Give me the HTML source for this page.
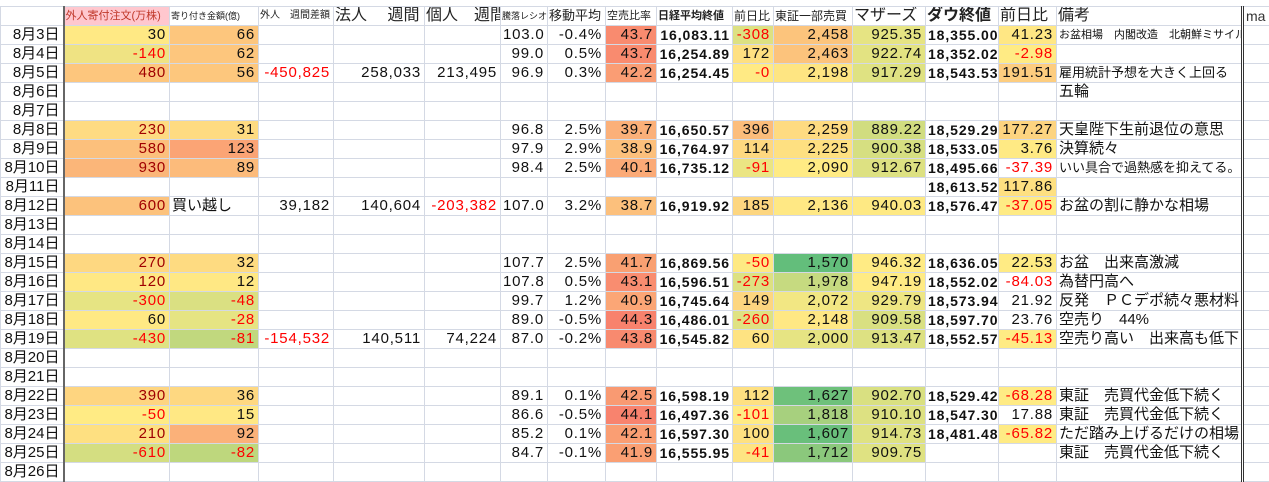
<!DOCTYPE html>
<html><head><meta charset="utf-8">
<style>
body{margin:0;background:#fff;width:1269px;height:465px;overflow:hidden;font-family:"Liberation Sans","Noto Sans CJK JP",sans-serif;}
table{position:absolute;left:0;top:6px;border-collapse:collapse;table-layout:fixed;width:1269px;}
td{height:18px;border:1px solid #d4d9e4;padding:0 3px 0 2px;font-size:15px;line-height:18px;white-space:nowrap;overflow:hidden;text-align:right;color:#111;letter-spacing:0.8px;}
td.h{text-align:left;font-size:11px;color:#222;padding:0 1px;letter-spacing:0;}
td.hl{text-align:left;font-size:16px;color:#222;padding:0 1px;letter-spacing:0;}
td.d{border-right:2px solid #666;font-size:15px;letter-spacing:0;}
td.b{font-weight:bold;font-size:14px;letter-spacing:0.9px;padding-right:2px;}
td.l{text-align:left;letter-spacing:0;}
td.s{text-align:left;font-size:11px;letter-spacing:0;}
.r{color:#ff0000;}
.dr{color:#a00000;}
td.ma{border-left:3px double #333;text-align:left;font-size:14px;color:#333;letter-spacing:0;}
.top{position:absolute;left:0;top:0;width:1269px;height:6px;border-bottom:1px solid #d4d9e4;}
</style></head><body>
<div class="top"></div>
<table>
<colgroup><col style="width:63px"><col style="width:106px"><col style="width:89px"><col style="width:75px"><col style="width:91px"><col style="width:76px"><col style="width:47px"><col style="width:58px"><col style="width:51px"><col style="width:76px"><col style="width:41px"><col style="width:79px"><col style="width:73px"><col style="width:73px"><col style="width:58px"><col style="width:186px"><col style="width:27px"></colgroup>
<tr><td class="d"></td><td class="h" style="background:#ffc7ce;color:#c0392b;">外人寄付注文(万株)</td><td class="h" style="font-size:9px">寄り付き金額(億)</td><td class="h" style="font-size:10px">外人　週間差額</td><td class="hl">法人　 週間</td><td class="hl">個人　週間</td><td class="h" style="font-size:9px">騰落レシオ</td><td class="h" style="font-size:13px">移動平均</td><td class="h" style="font-size:11px">空売比率</td><td class="h" style="font-weight:bold;font-size:11px">日経平均終値</td><td class="h" style="font-size:12px">前日比</td><td class="h" style="font-size:12px">東証一部売買</td><td class="hl">マザーズ</td><td class="hl" style="font-weight:bold">ダウ終値</td><td class="hl">前日比</td><td class="hl">備考</td><td class="ma">ma</td></tr>

<tr><td class="d">8月3日</td><td style="background:#ffe984">30</td><td style="background:#fdc67d">66</td><td></td><td></td><td></td><td>103.0</td><td>-0.4%</td><td style="background:#f98b6f">43.7</td><td class="b">16,083.11</td><td class="r" style="background:#dde182">-308</td><td style="background:#fcc47c">2,458</td><td style="background:#e6e483">925.35</td><td class="b">18,355.00</td><td style="background:#ffe784">41.23</td><td class="s">お盆相場　内閣改造　北朝鮮ミサイル</td><td class="ma"></td></tr>
<tr><td class="d">8月4日</td><td class="r" style="background:#efe383">-140</td><td style="background:#fdc67d">62</td><td></td><td></td><td></td><td>99.0</td><td>0.5%</td><td style="background:#f98b6f">43.7</td><td class="b">16,254.89</td><td style="background:#fee081">172</td><td style="background:#fcc37c">2,463</td><td style="background:#e3e382">922.74</td><td class="b">18,352.02</td><td class="r" style="background:#ffeb84">-2.98</td><td class="l"></td><td class="ma"></td></tr>
<tr><td class="d">8月5日</td><td class="dr" style="background:#fdc67d">480</td><td style="background:#fdc77d">56</td><td class="r">-450,825</td><td>258,033</td><td>213,495</td><td>96.9</td><td>0.3%</td><td style="background:#fa9d74">42.2</td><td class="b">16,254.45</td><td class="r" style="background:#ffea84">-0</td><td style="background:#fee582">2,198</td><td style="background:#dfe282">917.29</td><td class="b">18,543.53</td><td style="background:#fdcd7f">191.51</td><td class="l" style="font-size:13px">雇用統計予想を大きく上回る</td><td class="ma"></td></tr>
<tr><td class="d">8月6日</td><td></td><td></td><td></td><td></td><td></td><td></td><td></td><td></td><td></td><td></td><td></td><td></td><td></td><td></td><td class="l">五輪</td><td class="ma"></td></tr>
<tr><td class="d">8月7日</td><td></td><td></td><td></td><td></td><td></td><td></td><td></td><td></td><td></td><td></td><td></td><td></td><td></td><td></td><td class="l"></td><td class="ma"></td></tr>
<tr><td class="d">8月8日</td><td class="dr" style="background:#fedb82">230</td><td style="background:#fedb81">31</td><td></td><td></td><td></td><td>96.8</td><td>2.5%</td><td style="background:#fbb079">39.7</td><td class="b">16,650.57</td><td style="background:#fcbd7b">396</td><td style="background:#fedb81">2,259</td><td style="background:#d1dd80">889.22</td><td class="b">18,529.29</td><td style="background:#fdd480">177.27</td><td class="l">天皇陛下生前退位の意思</td><td class="ma"></td></tr>
<tr><td class="d">8月9日</td><td class="dr" style="background:#fcc07c">580</td><td style="background:#fba475">123</td><td></td><td></td><td></td><td>97.9</td><td>2.9%</td><td style="background:#fcc07c">38.9</td><td class="b">16,764.97</td><td style="background:#fed880">114</td><td style="background:#fee081">2,225</td><td style="background:#d6df81">900.38</td><td class="b">18,533.05</td><td style="background:#ffea84">3.76</td><td class="l">決算続々</td><td class="ma"></td></tr>
<tr><td class="d">8月10日</td><td class="dr" style="background:#fbb679">930</td><td style="background:#fcbb7b">89</td><td></td><td></td><td></td><td>98.4</td><td>2.5%</td><td style="background:#fbaa77">40.1</td><td class="b">16,735.12</td><td class="r" style="background:#ebe583">-91</td><td style="background:#ffeb84">2,090</td><td style="background:#dde182">912.67</td><td class="b">18,495.66</td><td class="r">-37.39</td><td class="l" style="font-size:13px">いい具合で過熱感を抑えてる。</td><td class="ma"></td></tr>
<tr><td class="d">8月11日</td><td></td><td></td><td></td><td></td><td></td><td></td><td></td><td></td><td></td><td></td><td></td><td></td><td class="b">18,613.52</td><td style="background:#fee081">117.86</td><td class="l"></td><td class="ma"></td></tr>
<tr><td class="d">8月12日</td><td class="dr" style="background:#fcc27c">600</td><td class="l">買い越し</td><td>39,182</td><td>140,604</td><td class="r">-203,382</td><td>107.0</td><td>3.2%</td><td style="background:#fcc07c">38.7</td><td class="b">16,919.92</td><td style="background:#fdd680">185</td><td style="background:#ffe884">2,136</td><td style="background:#fee983">940.03</td><td class="b">18,576.47</td><td class="r" style="background:#ffeb84">-37.05</td><td class="l">お盆の割に静かな相場</td><td class="ma"></td></tr>
<tr><td class="d">8月13日</td><td></td><td></td><td></td><td></td><td></td><td></td><td></td><td></td><td></td><td></td><td></td><td></td><td></td><td></td><td class="l"></td><td class="ma"></td></tr>
<tr><td class="d">8月14日</td><td></td><td></td><td></td><td></td><td></td><td></td><td></td><td></td><td></td><td></td><td></td><td></td><td></td><td></td><td class="l"></td><td class="ma"></td></tr>
<tr><td class="d">8月15日</td><td class="dr" style="background:#fed881">270</td><td style="background:#fedb81">32</td><td></td><td></td><td></td><td>107.7</td><td>2.5%</td><td style="background:#f9a072">41.7</td><td class="b">16,869.56</td><td class="r" style="background:#fee983">-50</td><td style="background:#63be7b">1,570</td><td style="background:#ffeb84">946.32</td><td class="b">18,636.05</td><td style="background:#ffeb84">22.53</td><td class="l">お盆　出来高激減</td><td class="ma"></td></tr>
<tr><td class="d">8月16日</td><td class="dr" style="background:#ffe884">120</td><td style="background:#ffe884">12</td><td></td><td></td><td></td><td>107.8</td><td>0.5%</td><td style="background:#f98d70">43.1</td><td class="b">16,596.51</td><td class="r" style="background:#dde182">-273</td><td style="background:#c6da80">1,978</td><td style="background:#ffeb84">947.19</td><td class="b">18,552.02</td><td class="r">-84.03</td><td class="l">為替円高へ</td><td class="ma"></td></tr>
<tr><td class="d">8月17日</td><td class="r" style="background:#e6e483">-300</td><td class="r" style="background:#dae082">-48</td><td></td><td></td><td></td><td>99.7</td><td>1.2%</td><td style="background:#fba676">40.9</td><td class="b">16,745.64</td><td style="background:#fdd680">149</td><td style="background:#f2e783">2,072</td><td style="background:#eee683">929.79</td><td class="b">18,573.94</td><td>21.92</td><td class="l">反発　ＰＣデポ続々悪材料</td><td class="ma"></td></tr>
<tr><td class="d">8月18日</td><td style="background:#ffe984">60</td><td class="r" style="background:#e6e483">-28</td><td></td><td></td><td></td><td>89.0</td><td>-0.5%</td><td style="background:#f8826d">44.3</td><td class="b">16,486.01</td><td class="r" style="background:#dfe282">-260</td><td style="background:#ffe884">2,148</td><td style="background:#d9e081">909.58</td><td class="b">18,597.70</td><td>23.76</td><td class="l">空売り　44%</td><td class="ma"></td></tr>
<tr><td class="d">8月19日</td><td class="r" style="background:#dfe282">-430</td><td class="r" style="background:#c1d87e">-81</td><td class="r">-154,532</td><td>140,511</td><td>74,224</td><td>87.0</td><td>-0.2%</td><td style="background:#f88a6f">43.8</td><td class="b">16,545.82</td><td style="background:#fee382">60</td><td style="background:#e6e483">2,000</td><td style="background:#dde182">913.47</td><td class="b">18,552.57</td><td class="r" style="background:#ffeb84">-45.13</td><td class="l">空売り高い　出来高も低下</td><td class="ma"></td></tr>
<tr><td class="d">8月20日</td><td></td><td></td><td></td><td></td><td></td><td></td><td></td><td></td><td></td><td></td><td></td><td></td><td></td><td></td><td class="l"></td><td class="ma"></td></tr>
<tr><td class="d">8月21日</td><td></td><td></td><td></td><td></td><td></td><td></td><td></td><td></td><td></td><td></td><td></td><td></td><td></td><td></td><td class="l"></td><td class="ma"></td></tr>
<tr><td class="d">8月22日</td><td class="dr" style="background:#fed580">390</td><td style="background:#fed881">36</td><td></td><td></td><td></td><td>89.1</td><td>0.1%</td><td style="background:#f99a72">42.5</td><td class="b">16,598.19</td><td style="background:#fee081">112</td><td style="background:#6ec17b">1,627</td><td style="background:#d9e081">902.70</td><td class="b">18,529.42</td><td class="r" style="background:#ffeb84">-68.28</td><td class="l">東証　売買代金低下続く</td><td class="ma"></td></tr>
<tr><td class="d">8月23日</td><td class="r" style="background:#ffeb84">-50</td><td style="background:#ffe884">15</td><td></td><td></td><td></td><td>86.6</td><td>-0.5%</td><td style="background:#f8836e">44.1</td><td class="b">16,497.36</td><td class="r" style="background:#ffeb84">-101</td><td style="background:#a7d07e">1,818</td><td style="background:#dde182">910.10</td><td class="b">18,547.30</td><td>17.88</td><td class="l">東証　売買代金低下続く</td><td class="ma"></td></tr>
<tr><td class="d">8月24日</td><td class="dr" style="background:#fee081">210</td><td style="background:#fbb179">92</td><td></td><td></td><td></td><td>85.2</td><td>0.1%</td><td style="background:#fa9e73">42.1</td><td class="b">16,597.30</td><td style="background:#fee181">100</td><td style="background:#69bf7b">1,607</td><td style="background:#dfe282">914.73</td><td class="b">18,481.48</td><td class="r" style="background:#ffeb84">-65.82</td><td class="l">ただ踏み上げるだけの相場</td><td class="ma"></td></tr>
<tr><td class="d">8月25日</td><td class="r" style="background:#d4de81">-610</td><td class="r" style="background:#bed77d">-82</td><td></td><td></td><td></td><td>84.7</td><td>-0.1%</td><td style="background:#fa9f73">41.9</td><td class="b">16,555.95</td><td class="r" style="background:#fee482">-41</td><td style="background:#8bc87c">1,712</td><td style="background:#dfe282">909.75</td><td></td><td></td><td class="l">東証　売買代金低下続く</td><td class="ma"></td></tr>
<tr><td class="d">8月26日</td><td></td><td></td><td></td><td></td><td></td><td></td><td></td><td></td><td></td><td></td><td></td><td></td><td></td><td></td><td class="l"></td><td class="ma"></td></tr>
</table>
</body></html>
